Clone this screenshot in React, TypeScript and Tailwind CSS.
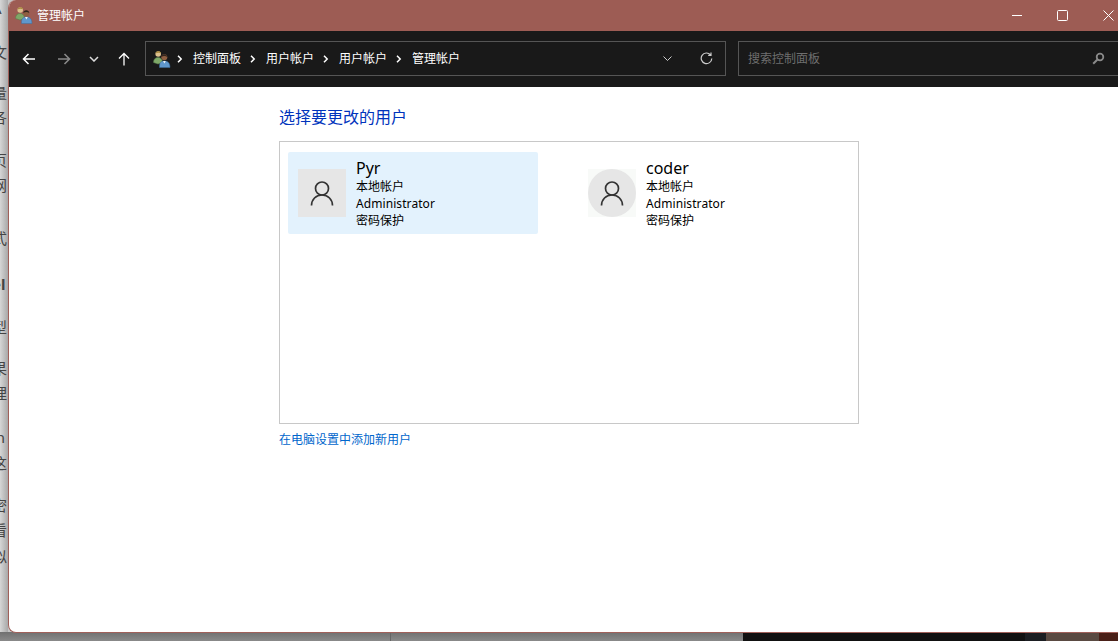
const cjk = "font-['Segoe_UI','Noto_Sans','Noto_Sans_CJK_SC',sans-serif]";

// text of the page behind the window, only its right edge shows
const behind = [
  { t: "A", c: "-mt-[2px]" },
  { t: "文", c: "mt-[24px]" },
  { t: "量", c: "mt-[21px]" },
  { t: "各", c: "mt-[4px]" },
  { t: "页", c: "mt-[23px]" },
  { t: "网", c: "mt-[5px]" },
  { t: "式", c: "mt-[33px]" },
  { t: "el", c: "mt-[26px] font-bold" },
  { t: "型", c: "mt-[23px]" },
  { t: "果", c: "mt-[21px]" },
  { t: "理", c: "mt-[5px]" },
  { t: "in", c: "mt-[24px]" },
  { t: "这", c: "mt-[6px]" },
  { t: "密", c: "mt-[22px]" },
  { t: "看", c: "mt-[5px]" },
  { t: "似", c: "mt-[6px]" },
];

const AccountsIcon = () => (
  <svg width="18" height="18" viewBox="0 0 18 18" className="shrink-0">
    <path d="M.5 12.500C.5 9 2.500 7.500 5 7.500s4.500 1.500 4.500 5L5 14z" fill="#7fa868" stroke="#567a48" strokeWidth=".5" />
    <circle cx="5.200" cy="4" r="2.800" fill="#dcc08e" />
    <path d="M2.500 3.500C2.800.6 7.600.4 8 3.200 6.500 2.400 4 2.400 2.500 3.500z" fill="#a8893f" />
    <path d="M6.500 17.500c-.3-4.800 1.500-6.500 4.800-6.500s5.700 1.700 5.700 6.500z" fill="#5f97cc" stroke="#3f6f9f" strokeWidth=".5" />
    <path d="M10 11h2.800l-1.400 2.400z" fill="#eef3f8" />
    <circle cx="11.300" cy="7.300" r="3" fill="#8f5f40" />
    <path d="M8.300 7c-.2-3.600 5.800-3.900 6 0-1.800-1.200-4.200-1.200-6 0z" fill="#33261e" />
  </svg>
);

const Person = () => (
  <svg width="48" height="48" viewBox="0 0 48 48" fill="none" stroke="#333" strokeWidth="1.700">
    <circle cx="24" cy="19.500" r="6.500" />
    <path d="M13.500 36.500c0-6 4.500-10.500 10.500-10.500s10.500 4.500 10.500 10.500" />
  </svg>
);

const Crumb = ({ label }: { label: string }) => (
  <div className="flex items-center w-[73px] shrink-0">
    <svg width="6" height="8" viewBox="0 0 6 8" fill="none" stroke="#fff" strokeWidth="1.500" className="ml-[2px] mr-[10px]">
      <path d="M1 .8 4.200 4 1 7.200" />
    </svg>
    <span className="text-[12px] text-white whitespace-nowrap">{label}</span>
  </div>
);

const Tile = ({ name, round, active }: { name: string; round?: boolean; active?: boolean }) => (
  <div className={`w-[250px] h-[82px] rounded-[2px] flex items-center pl-[10px] ${active ? "bg-[#e3f2fd]" : ""}`}>
    <div className={`w-[48px] h-[48px] ${round ? "bg-[#f8faf8]" : "bg-[#e6e6e6]"}`}>
      <div className={`w-[48px] h-[48px] bg-[#e6e6e6] ${round ? "rounded-full" : ""}`}>
        <Person />
      </div>
    </div>
    <div className="ml-[10px] text-black mt-[1px]">
      <div className="text-[16px] leading-[20px]">{name}</div>
      <div className="text-[12px] leading-[17px]">本地帐户</div>
      <div className="text-[12px] leading-[17px] tracking-[0.08px]">Administrator</div>
      <div className="text-[12px] leading-[17px]">密码保护</div>
    </div>
  </div>
);

export default function App() {
  return (
    <div className={`relative w-[1118px] h-[641px] overflow-hidden ${cjk}`}>
      {/* desktop behind the window */}
      <div className="h-full flex flex-col bg-[#c4c4c4]">
        <div className="flex-1 w-[8px] overflow-hidden bg-gradient-to-r from-[#d6d6d6] to-[#a8a8a8] text-[#444] text-[15px]">
          {behind.map((b) => (
            <div key={b.t} className={`h-[20px] leading-[20px] -ml-[8px] w-[16px] whitespace-nowrap ${b.c}`}>
              {b.t}
            </div>
          ))}
        </div>
        <div className="h-[9px] flex">
          <div className="w-[390px] bg-gradient-to-b from-[#707070] to-[#8a8a8a]" />
          <div className="w-[353px] border-l border-[#666] bg-gradient-to-b from-[#707070] to-[#8a8a8a]" />
          <div className="w-[282px] bg-[#111]" />
          <div className="w-[21px] bg-[#1c1e22]" />
          <div className="w-[53px] bg-[#5a4a42]" />
          <div className="flex-1 bg-[#4a2018]" />
        </div>
      </div>

      {/* explorer window */}
      <div className="absolute left-[8px] top-0 w-[1110px] h-[633px] rounded-tl-[8px] rounded-bl-[8px] overflow-hidden bg-white flex flex-col border-l border-b border-[#a0605a]">
        <div className="h-[31px] bg-[#9d5c54] flex items-center shrink-0 -ml-px">
          <div className="ml-[7px] -mt-[2px]">
            <AccountsIcon />
          </div>
          <span className="ml-[4px] text-[12px] text-white">管理帐户</span>
          <div className="ml-auto -mr-[13px] flex items-center text-white">
            <div className="w-[45px] flex justify-center">
              <svg width="10" height="2" viewBox="0 0 10 2" stroke="#fff"><path d="M0 .5h10" /></svg>
            </div>
            <div className="w-[46px] flex justify-center">
              <svg width="11" height="11" viewBox="0 0 11 11" fill="none" stroke="#fff"><rect x=".5" y=".5" width="10" height="10" rx="1" /></svg>
            </div>
            <div className="w-[46px] flex justify-center">
              <svg width="11" height="11" viewBox="0 0 11 11" fill="none" stroke="#fff"><path d="M.5.5l10 10M10.500.5l-10 10" /></svg>
            </div>
          </div>
        </div>

        <div className="h-[56px] bg-[#191919] flex items-start pt-[10px] shrink-0 -ml-px">
          <div className="w-[137px] h-[35px] flex items-center shrink-0">
            <svg width="14" height="14" viewBox="0 0 14 14" fill="none" stroke="#fff" strokeWidth="1.500" className="ml-[14px]">
              <path d="M13 7H1.500M6.500 2 1.500 7l5 5" />
            </svg>
            <svg width="14" height="14" viewBox="0 0 14 14" fill="none" stroke="#888" strokeWidth="1.600" className="ml-[21px]">
              <path d="M1 7h11.500M7.500 2l5 5-5 5" />
            </svg>
            <svg width="10" height="6" viewBox="0 0 10 6" fill="none" stroke="#ddd" strokeWidth="1.500" className="ml-[18px]">
              <path d="M1 1l4 4 4-4" />
            </svg>
            <svg width="14" height="14" viewBox="0 0 14 14" fill="none" stroke="#fff" strokeWidth="1.300" className="ml-[18px]">
              <path d="M7 13.500V1.500M2 6.500l5-5 5 5" />
            </svg>
          </div>
          <div className="w-[581px] h-[35px] border border-[#555] flex items-center pl-[7px] shrink-0">
            <AccountsIcon />
            <div className="w-[4px]" />
            <Crumb label="控制面板" />
            <Crumb label="用户帐户" />
            <Crumb label="用户帐户" />
            <Crumb label="管理帐户" />
            <svg width="9" height="5" viewBox="0 0 9 5" fill="none" stroke="#ccc" className="ml-[196px]">
              <path d="M.5.500l4 4 4-4" />
            </svg>
            <svg width="13" height="13" viewBox="0 0 13 13" fill="none" stroke="#ccc" strokeWidth="1.200" className="ml-[28px]">
              <path d="M10.500 2.800A5.300 5.300 0 1 0 11.800 6.500M11 .5v2.800H8.200" />
            </svg>
          </div>
          <div className="ml-[12px] flex-1 h-[35px] border border-r-0 border-[#555] flex items-center pl-[9px] pr-[13px]">
            <span className="text-[12px] text-[#6e6e6e]">搜索控制面板</span>
            <svg width="13" height="13" viewBox="0 0 13 13" fill="none" stroke="#8a8a8a" strokeWidth="1.800" className="ml-auto">
              <circle cx="8" cy="5" r="3.300" />
              <path d="M5.500 7.500 1.200 11.800" strokeWidth="2" />
            </svg>
          </div>
        </div>

        <div className="flex-1 pl-[271px] pt-[20px] -ml-px">
          <h1 className="text-[16px] leading-[21px] text-[#0033bc] font-normal">选择要更改的用户</h1>
          <div className="mt-[13px] w-[580px] h-[283px] border border-[#c8c8c8] pl-[8px] pt-[10px] flex gap-[40px]">
            <Tile name="Pyr" active />
            <Tile name="coder" round />
          </div>
          <div className="mt-[8px] text-[12px] leading-[16px] text-[#0066cc]">在电脑设置中添加新用户</div>
        </div>
      </div>
    </div>
  );
}
